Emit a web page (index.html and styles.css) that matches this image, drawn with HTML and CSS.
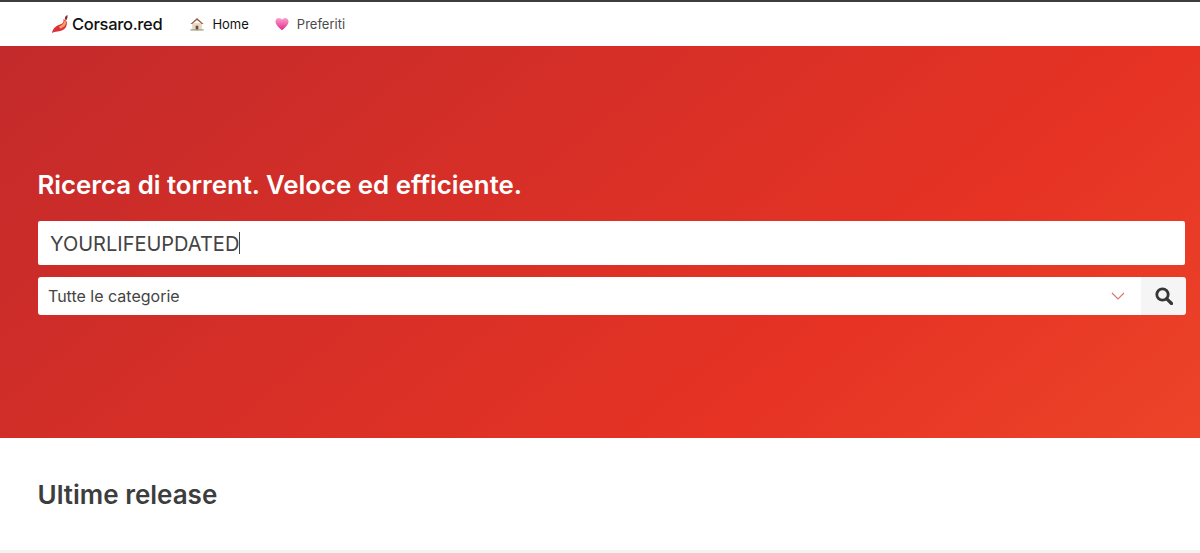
FILE: index.html
```html
<!DOCTYPE html>
<html lang="en">
    <head>
        <meta charset="UTF-8">
        <title>Corsaro.red</title>
        <link rel="stylesheet" href="styles.css">
    </head>
    <body>

        <nav class="navbar">
            <a class="brand" href="#">
                <svg class="brand-logo" viewBox="0 0 20 20" width="20" height="20">
                    <path d="M1 19 C2 14 5 12 9 10.500 C12 9.500 13 8 12.500 5 L15.500 7 C17 12 14 16 9 17 C6 17.500 3 18 1 19 Z" fill="#dc2f3c"/>
                    <path d="M8 12.500 C11 11.500 13 9.500 13.500 6.500 L15 7.500 C15.500 10.500 13 14 9 14.500 Z" fill="#f2a25c"/>
                    <path d="M14 5.500 C13.500 3.500 14.500 1.500 16.500 1 C16.500 3 16.500 4.500 15.500 6 Z" fill="#8a2a24"/>
                </svg>
                <span>Corsaro.red</span>
            </a>
            <a class="nav-item active" href="#">
                <svg class="nav-icon" viewBox="0 0 16 16" width="14" height="14">
                    <rect x="2.500" y="7" width="11" height="8" fill="#e6d8c6"/>
                    <path d="M8 1 L15.500 8 L13.500 8 L8 3.500 L2.500 8 L0.500 8 Z" fill="#9c5a42"/>
                    <rect x="6.500" y="10" width="3" height="5" fill="#6b4a34"/>
                    <rect x="0.500" y="14" width="15" height="1.500" fill="#a3a384"/>
                </svg>
                Home
            </a>
            <a class="nav-item" href="#">
                <svg class="nav-icon" viewBox="0 0 16 16" width="14" height="14">
                    <defs>
                        <linearGradient id="heartFill" x1="0" y1="0" x2="0" y2="1">
                            <stop offset="0" stop-color="#fa9fcb"/>
                            <stop offset="0.500" stop-color="#f065ad"/>
                            <stop offset="1" stop-color="#d92a86"/>
                        </linearGradient>
                    </defs>
                    <path d="M8 15 C3 11 0.500 8.500 0.500 5.200 C0.500 2.800 2.400 1.200 4.400 1.200 C6 1.200 7.300 2 8 3.300 C8.700 2 10 1.200 11.600 1.200 C13.600 1.200 15.500 2.800 15.500 5.200 C15.500 8.500 13 11 8 15 Z" fill="url(#heartFill)"/>
                </svg>
                Preferiti
            </a>
        </nav>

        <section class="hero">
            <h1>Ricerca di torrent. Veloce ed efficiente.</h1>
            <div class="search-box"><span class="search-text">YOURLIFEUPDATED</span><span class="caret"></span></div>
            <div class="search-row">
                <div class="select">
                    <span>Tutte le categorie</span>
                    <svg viewBox="0 0 14 8" width="14" height="8">
                        <path d="M1 1 L7 7 L13 1" fill="none" stroke="#d9796a" stroke-width="1.200"/>
                    </svg>
                </div>
                <button class="search-btn">
                    <svg viewBox="0 0 18 18" width="18" height="18">
                        <circle cx="7.500" cy="7.500" r="5.700" fill="none" stroke="#363636" stroke-width="2.800"/>
                        <path d="M11.800 11.800 L16.500 16.500" stroke="#363636" stroke-width="3.200" stroke-linecap="round"/>
                    </svg>
                </button>
            </div>
        </section>

        <section class="latest">
            <h2>Ultime release</h2>
        </section>
        <div class="footer-strip"></div>

    </body>
</html>
```

FILE: styles.css
```css
* {
    box-sizing: border-box;
}
html, body {
    height: 100%;
}
body {
    margin: 0;
    display: flex;
    flex-direction: column;
    overflow: hidden;
    font-family: Inter, "Liberation Sans", sans-serif;
    color: #363636;
    background: #fff;
}
a {
    text-decoration: none;
}
.navbar {
    height: 46px;
    flex: none;
    display: flex;
    align-items: center;
    padding-left: 51px;
    border-top: 2px solid #3d3d3d;
    background: #fff;
}
.brand {
    display: flex;
    align-items: center;
    gap: 1px;
    margin-right: 28px;
    font-size: 16.500px;
    font-weight: 500;
    letter-spacing: -0.3px;
    color: #111;
}
.nav-item {
    display: flex;
    align-items: center;
    gap: 8px;
    margin-right: 26px;
    font-size: 13px;
    color: #4a4a4a;
}
.nav-item.active {
    color: #111;
}
.hero {
    height: 392px;
    flex: none;
    padding: 124px 15px 0 38px;
    background: linear-gradient(141deg, #c32a2b 0%, #e63324 71%, #ec4429 100%);
}
.hero h1 {
    margin: 0 0 21px -0.500px;
    font-size: 25.800px;
    line-height: 30px;
    font-weight: 600;
    color: #fff;
}
.search-box {
    height: 44px;
    margin-bottom: 12px;
    padding-left: 12px;
    display: flex;
    align-items: center;
    border-radius: 2px;
    background: #fff;
    font-size: 20px;
    color: #444;
}
.search-text {
    padding-top: 2px;
}
.caret {
    width: 1px;
    height: 22px;
    background: #444;
}
.search-row {
    display: flex;
    height: 38px;
    margin-right: -1px;
}
.select {
    flex: 1;
    display: flex;
    align-items: center;
    justify-content: space-between;
    padding: 0 16px 0 10px;
    border-radius: 3px 0 0 3px;
    background: #fff;
    font-size: 16px;
    color: #444;
}
.search-btn {
    width: 45px;
    padding: 0;
    border: 0;
    border-radius: 0 3px 3px 0;
    display: flex;
    align-items: center;
    justify-content: center;
    background: #f5f5f5;
}
.latest {
    flex: 1;
    padding: 42px 38px 0 37.500px;
}
.latest h2 {
    margin: 0;
    font-size: 26px;
    line-height: 30px;
    font-weight: 600;
    color: #3d3d3d;
}
.footer-strip {
    height: 3px;
    flex: none;
    background: #f3f3f3;
}
```
